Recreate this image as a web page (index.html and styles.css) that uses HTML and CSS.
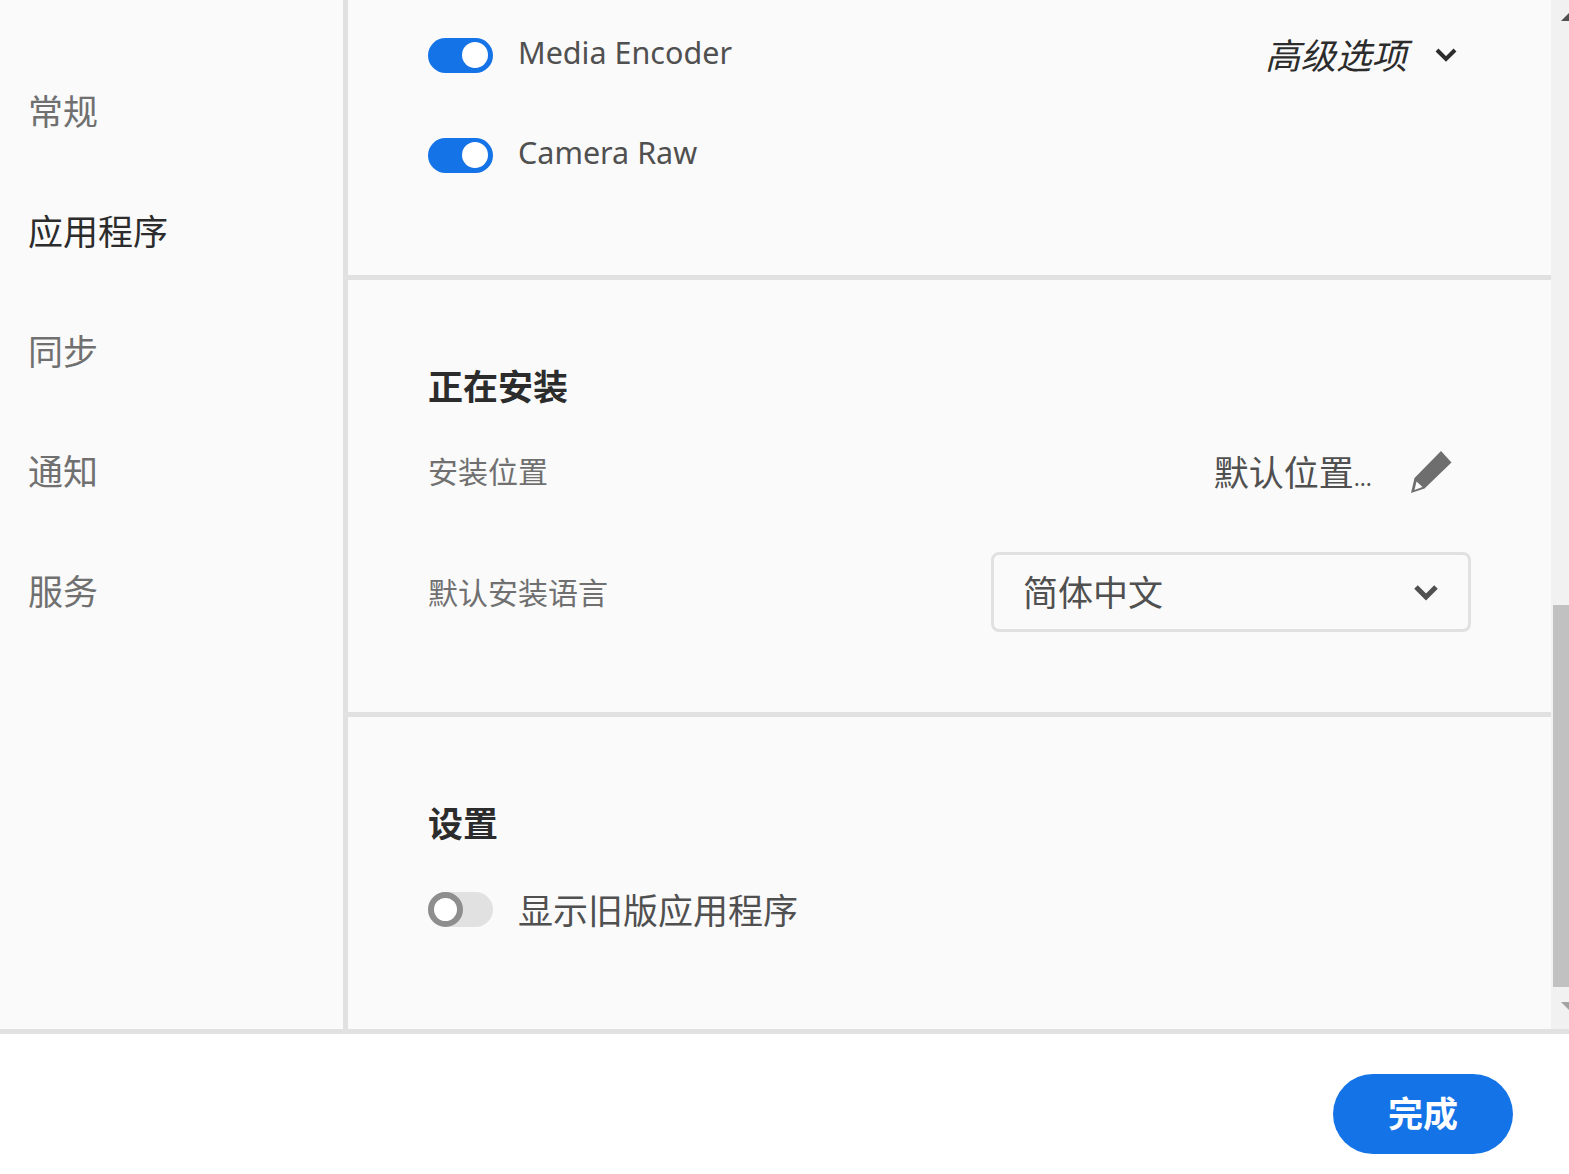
FILE: index.html
```html
<!DOCTYPE html>
<html lang="zh-CN">
<head>
<meta charset="utf-8">
<title>首选项</title>
<link rel="stylesheet" href="styles.css">
</head>
<body>
<div class="shell">
  <div class="top">
    <nav class="sidebar">
      <div class="nav-item">常规</div>
      <div class="nav-item active">应用程序</div>
      <div class="nav-item">同步</div>
      <div class="nav-item">通知</div>
      <div class="nav-item">服务</div>
    </nav>
    <main class="main">
      <section class="section apps">
        <div class="row toggle-row">
          <span class="toggle on"><span class="knob"></span></span>
          <span class="app-name name-media">Media Encoder</span>
          <span class="advanced">
            <span class="advanced-text">高级选项</span>
            <svg class="chev-small" width="24" height="16" viewBox="0 0 24 16"><path d="M3 3l9 9 9-9" fill="none" stroke="#2c2c2c" stroke-width="4"/></svg>
          </span>
        </div>
        <div class="row toggle-row">
          <span class="toggle on"><span class="knob"></span></span>
          <span class="app-name">Camera Raw</span>
        </div>
      </section>
      <section class="section install">
        <h2 class="heading">正在安装</h2>
        <div class="row location-row">
          <span class="label">安装位置</span>
          <span class="location">
            <span class="location-text">默认位置<span class="dots">...</span></span>
            <svg class="pencil" width="42" height="44" viewBox="0 0 42 44"><path fill-rule="evenodd" d="M31 1l10.500 11.500-27 26L1 43l3.500-15zM6.500 31.500L4.500 40l8-3z" fill="#6e6e6e"/></svg>
          </span>
        </div>
        <div class="row language-row">
          <span class="label">默认安装语言</span>
          <div class="select">
            <span class="select-text">简体中文</span>
            <svg width="26" height="18" viewBox="0 0 26 18"><path d="M3 4l10 10 10-10" fill="none" stroke="#505050" stroke-width="5"/></svg>
          </div>
        </div>
      </section>
      <section class="section settings">
        <h2 class="heading">设置</h2>
        <div class="row legacy-row">
          <span class="toggle off"><span class="knob"></span></span>
          <span class="legacy-name">显示旧版应用程序</span>
        </div>
      </section>
    </main>
    <div class="scrollbar">
      <svg class="arrow" width="16" height="8" viewBox="0 0 16 8"><path d="M0 8L8 0l8 8z" fill="#505050"/></svg>
      <div class="thumb"></div>
      <svg class="arrow arrow-down" width="16" height="8" viewBox="0 0 16 8"><path d="M0 0l8 8 8-8z" fill="#a3a3a3"/></svg>
    </div>
  </div>
  <footer class="footer">
    <button class="done">完成</button>
  </footer>
</div>
</body>
</html>
```
FILE: styles.css
```css
* { box-sizing: border-box; }
html, body { margin: 0; height: 100%; overflow: hidden; }
body {
  background: #fff;
  font-family: "Noto Sans CJK SC", "Noto Sans", sans-serif;
  color: #505050;
}
.shell { width: 1569px; height: 1174px; display: flex; flex-direction: column; }
.top {
  height: 1034px;
  display: flex;
  background: #fafafa;
  border-bottom: 5px solid #e1e1e1;
}
.sidebar {
  width: 348px;
  padding: 49px 0 0 28px;
  border-right: 5px solid #e1e1e1;
}
.nav-item {
  height: 120px;
  display: flex;
  align-items: center;
  font-size: 35px;
  color: #707070;
}
.nav-item.active { color: #2c2c2c; }
.main { width: 1203px; }
.section {
  padding: 0 80px;
  border-bottom: 5px solid #e1e1e1;
}
.section:last-child { border-bottom: 0; }
.apps { height: 280px; padding-top: 5px; }
.install { height: 437px; padding-top: 80px; }
.settings { height: 312px; padding-top: 80px; }
.row { display: flex; align-items: center; }
.toggle-row { height: 100px; }
.toggle {
  width: 65px;
  height: 35px;
  border-radius: 18px;
  display: flex;
  align-items: center;
  flex: none;
}
.toggle.on { background: #1473e6; justify-content: flex-end; padding-right: 5px; }
.toggle.on .knob { width: 26px; height: 26px; border-radius: 50%; background: #fff; }
.toggle.off { background: #e1e1e1; }
.toggle.off .knob {
  width: 35px;
  height: 35px;
  border-radius: 50%;
  background: #fff;
  border: 6px solid #8e8e8e;
}
.app-name {
  margin-left: 25px;
  margin-top: -7px;
  font-family: "Noto Sans", sans-serif;
  font-size: 30.5px;
  color: #505050;
}
.advanced { margin-left: auto; margin-right: 13px; display: flex; align-items: center; }
.advanced-text { font-size: 35.5px; font-style: italic; color: #2c2c2c; margin-top: -4px; }
.chev-small { margin-left: 27px; }
.heading {
  margin: 2px 0 0;
  height: 44px;
  display: flex;
  align-items: center;
  font-size: 35px;
  font-weight: 700;
  color: #2c2c2c;
}
.label { font-size: 30px; color: #707070; margin-top: -2px; }
.location-row { height: 80px; margin-top: 24px; justify-content: space-between; }
.location-row .label { margin-top: 0; }
.location { display: flex; align-items: center; margin-right: 19px; }
.location-text { font-size: 35px; color: #505050; }
.dots { font-size: 22px; }
.pencil { margin-left: 38px; margin-top: 4px; }
.language-row { margin-top: 42px; justify-content: space-between; }
.select {
  width: 480px;
  height: 80px;
  border: 3px solid #e1e1e1;
  border-radius: 8px;
  padding: 0 29px;
  display: flex;
  align-items: center;
  justify-content: space-between;
  font-size: 35px;
}
.select-text { margin-top: -3px; }
.legacy-row { margin-top: 41px; }
.legacy-name { margin-left: 25px; margin-top: -1px; font-size: 35px; color: #505050; }
.scrollbar {
  width: 18px;
  background: #f1f1f1;
  overflow: hidden;
  display: flex;
  flex-direction: column;
  padding-top: 13px;
}
.arrow { display: block; flex: none; margin-left: 10px; }
.thumb { flex: none; height: 382px; margin: 584px 0 0 2px; background: #c1c1c1; }
.arrow-down { margin-top: 15px; }
.footer {
  flex: 1;
  display: flex;
  justify-content: flex-end;
  padding: 40px 56px 0 0;
}
.done {
  width: 180px;
  height: 80px;
  border: 0;
  border-radius: 40px;
  padding: 0 0 6px;
  background: #1473e6;
  color: #fff;
  font-family: inherit;
  font-size: 35px;
  font-weight: 700;
}
```
